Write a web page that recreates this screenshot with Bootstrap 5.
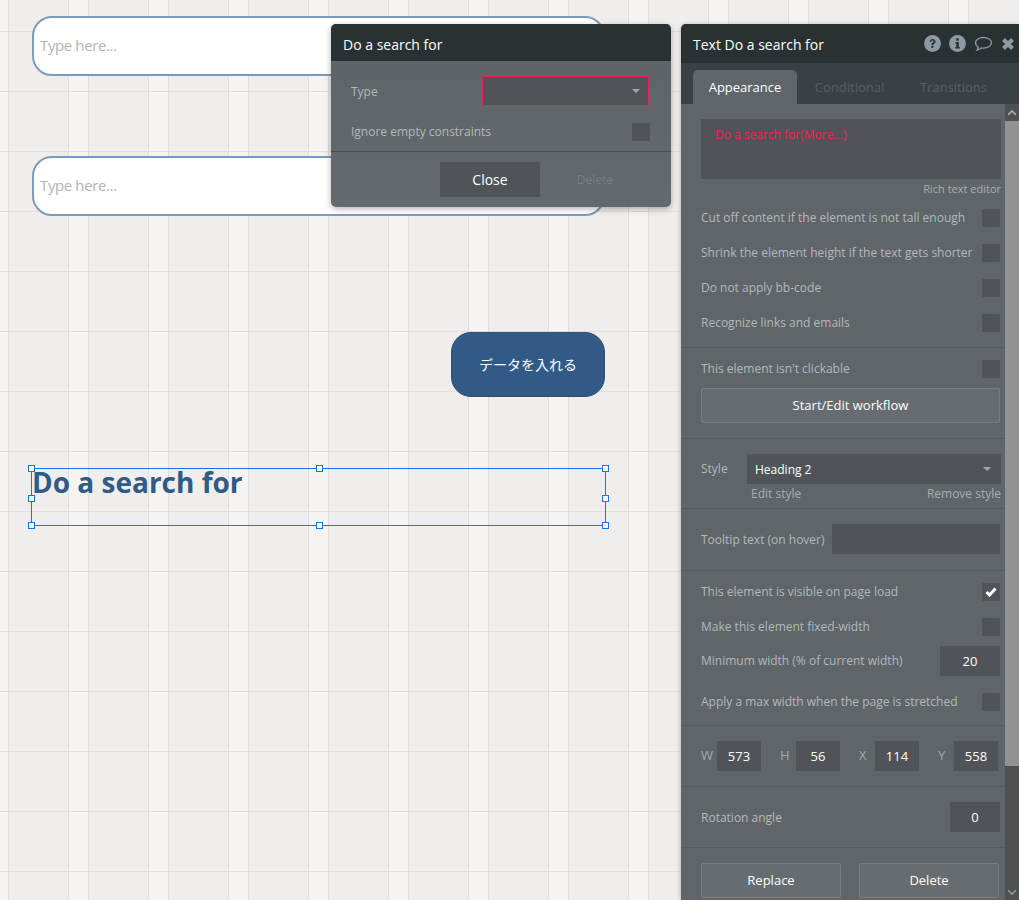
<!DOCTYPE html>
<html lang="en">
<head>
<meta charset="utf-8">
<title>Editor</title>
<link href="https://cdn.jsdelivr.net/npm/bootstrap@5.3.0/dist/css/bootstrap.min.css" rel="stylesheet">
<style>
html,body{margin:0;height:100%;overflow:hidden}
body{font-family:"Open Sans","Noto Sans CJK JP",sans-serif;font-size:12px;color:#b4b9bb}
.stage{position:relative;width:1019px;height:900px;overflow:hidden;background-color:#f6f3f0;
 background-image:
 repeating-linear-gradient(180deg,transparent 0 31px,#e2dfdc 31px 32px,transparent 32px 60px),
 repeating-linear-gradient(90deg,#f6f3f0 0 8px,#e0dddb 8px 9px,#f0edea 9px 68px,#e0dddb 68px 69px,#f6f3f0 69px 88px);
 background-size:100% 60px,80px 100%;background-repeat:repeat;background-position:0 0,0 0}
.typein{position:absolute;left:32px;width:573px;height:60px;background:#fff;border:2px solid #7b9cba;border-radius:20px;padding-left:6px;color:#b5b2b0;font-family:"Open Sans",sans-serif;font-weight:400;font-size:15px;line-height:54px;letter-spacing:-.38px}
.typein.one{top:16px}.typein.two{top:156px}
.savebtn{position:absolute;left:451px;top:332px;width:154px;height:65px;background:#325a87;border:1px solid #2d5078;border-radius:20px;color:#fff;font-size:14px;font-family:"Noto Sans CJK JP",sans-serif}
.selbox{position:absolute;left:31px;top:468px;width:575px;height:58px;border:1px solid #1575e8}
.headtext{position:absolute;left:32px;top:464px;color:#2f5b88;font-family:"Open Sans",sans-serif;font-weight:700;font-size:28px;line-height:36px;letter-spacing:0;white-space:nowrap}
.hdl{position:absolute;width:7px;height:7px;background:#fff;border:1px solid #1575e8}
.dialog{position:absolute;left:331px;top:24px;width:340px;height:183px;border-radius:5px;background:linear-gradient(#5d6367,#63696d);box-shadow:0 2px 6px rgba(0,0,0,.3);overflow:hidden}
.dlghead{height:37px;background:#2a3133;color:#fff;font-size:14px;line-height:41px;padding-left:12px}
.dlgrow{padding-left:20px;padding-right:21px}
.field{background:#505458;color:#fff;border-radius:1px}
.dlgsel{width:167px;height:30px;border:1px solid #ee1f55;margin-right:1px}
.tick{width:18px;height:18px;background:#505458;border-radius:1px;flex:none}
.caret{width:0;height:0;border-left:4.5px solid transparent;border-right:4.5px solid transparent;border-top:4.5px solid #a4a8aa}
.closebtn{width:100px;height:35px;background:#505458;color:#fff;font-size:14px;line-height:35px;text-align:center}
.panel{position:absolute;left:681px;top:24px;width:338px;height:876px;border-radius:5px 0 0 0;background:#5f6569;overflow:hidden;box-shadow:0 1px 5px rgba(0,0,0,.3)}
.panelhead{height:39px;background:#2a3133;color:#fff;font-size:14px;padding:0 4px 0 12px}
.tabstrip{height:41px;background:#3a4144;padding:7px 0 0 12px;font-size:13px;color:#585e61;gap:8px}
.tabon{width:104px;height:34px;border-radius:5px 5px 0 0;background:#5f6569;color:#fff;text-align:center;line-height:34px}
.taboff{line-height:34px;width:89px}
.scrolltrack{position:absolute;right:0;top:80px;width:14px;bottom:0;background:#4d5154}
.scrollthumb{position:absolute;left:0;top:17px;width:14px;height:645px;background:#8f9396}
.arrow{position:absolute;left:3px;width:8px;height:8px}
.paneinner{width:324px}
.sect{padding:0 5px 0 20px;border-bottom:1px solid #565b5f}
.editor{height:60px;background:#505458;color:#fa1a55;font-size:12px;padding:7px 14px;margin-right:-1px}
.hint{font-size:12px;line-height:14px;color:#a9adaf}
.opt{height:35px}
.nudge{padding-top:2px}
.greybtn{height:35px;background:#676c70;border:1px solid #777c80;border-radius:2px;color:#fff;font-size:13px;line-height:33px;text-align:center}
.equalbtn{flex:1 1 0}
.val{height:30px;background:#505458;color:#fff;text-align:center;line-height:30px;font-size:13px}
.coordlbl{color:#a3a8aa;font-size:13px;width:16px;text-align:left}
.dimbox{width:44px}
</style>
</head>
<body>
<div class="stage">
  <div class="typein one">Type here...</div>
  <div class="typein two">Type here...</div>
  <div class="savebtn d-flex align-items-center justify-content-center">データを入れる</div>
  <div class="selbox"></div>
  <div class="headtext">Do a search for</div>
  <span class="hdl" style="left:28px;top:465px"></span><span class="hdl" style="left:316px;top:465px"></span><span class="hdl" style="left:602px;top:465px"></span>
  <span class="hdl" style="left:28px;top:495px"></span><span class="hdl" style="left:602px;top:495px"></span>
  <span class="hdl" style="left:28px;top:522px"></span><span class="hdl" style="left:316px;top:522px"></span><span class="hdl" style="left:602px;top:522px"></span>

  <div class="dialog">
    <div class="dlghead">Do a search for</div>
    <div class="dlgrow d-flex align-items-center justify-content-between" style="height:46px;margin-top:7px"><span class="nudge">Type</span>
      <div class="field dlgsel d-flex align-items-center justify-content-end pe-2"><span class="caret"></span></div></div>
    <div class="dlgrow d-flex align-items-center justify-content-between" style="height:36px"><span>Ignore empty constraints</span><span class="tick"></span></div>
    <div class="d-flex align-items-center" style="border-top:1px solid #484d50;margin-top:1px;padding:10px 0 0 109px">
      <div class="closebtn">Close</div>
      <div class="ms-auto" style="color:#797d80;margin-right:58px">Delete</div>
    </div>
  </div>

  <div class="panel">
    <div class="panelhead d-flex align-items-center justify-content-between">
      <span class="nudge">Text Do a search for</span>
      <div class="d-flex align-items-center" style="gap:8px">
        <svg width="17" height="17" viewBox="0 0 17 17"><circle cx="8.5" cy="8.5" r="8.400" fill="#8c9aa3"/><path d="M5.600 6.600C5.800 4.900 7 4 8.600 4c1.700 0 3 1 3 2.500 0 2.200-2.300 2-2.300 3.700H7.400c0-2.600 2.200-2.500 2.200-3.600 0-.6-.4-1-1.100-1-.7 0-1.100.4-1.200 1.100z" fill="#2a3133"/><rect x="7.400" y="11" width="2" height="2" fill="#2a3133"/></svg>
        <svg width="17" height="17" viewBox="0 0 17 17"><circle cx="8.500" cy="8.500" r="8.400" fill="#8c9aa3"/><rect x="7.200" y="3.300" width="2.600" height="2.400" fill="#2a3133"/><path d="M6.300 7h3.500v5h1v1.500H6.300V12h1V8.500h-1z" fill="#2a3133"/></svg>
        <svg width="19" height="16" viewBox="0 0 19 16"><path d="M9.500 1.500c4.500 0 8 2.400 8 5.300s-3.500 5.300-8 5.300c-.8 0-1.500-.1-2.200-.2C6 13.200 4.500 14 3 14.200c.8-.9 1.300-1.900 1.400-3C2.700 10.200 1.500 8.600 1.500 6.800c0-2.900 3.500-5.300 8-5.300z" fill="none" stroke="#8c9aa3" stroke-width="1.300"/></svg>
        <svg width="14" height="14" viewBox="0 0 14 14"><path d="M2.500 2.500l9 9M11.500 2.500l-9 9" stroke="#8c9aa3" stroke-width="4"/></svg>
      </div>
    </div>
    <div class="tabstrip d-flex">
      <div class="tabon">Appearance</div><div class="taboff text-center">Conditional</div><div class="taboff text-center" style="margin-left:7px">Transitions</div>
    </div>
    <div class="scrolltrack"><div class="scrollthumb"></div>
      <svg class="arrow" style="top:5px" viewBox="0 0 8 8"><path d="M0 6l4-4 4 4" fill="none" stroke="#a7abad" stroke-width="1.600"/></svg>
      <svg class="arrow" style="bottom:4px" viewBox="0 0 8 8"><path d="M0 2l4 4 4-4" fill="none" stroke="#8f9396" stroke-width="1.600"/></svg>
    </div>
    <div class="paneinner">
      <div class="sect" style="padding-top:15px;height:244px">
        <div class="editor">Do a search for(More...)</div>
        <div class="hint text-end" style="margin:3px -1px 4px 0;font-size:11px">Rich text editor</div>
        <div class="opt d-flex align-items-center justify-content-between"><span>Cut off content if the element is not tall enough</span><span class="tick"></span></div>
        <div class="opt d-flex align-items-center justify-content-between"><span>Shrink the element height if the text gets shorter</span><span class="tick"></span></div>
        <div class="opt d-flex align-items-center justify-content-between"><span>Do not apply bb-code</span><span class="tick"></span></div>
        <div class="opt d-flex align-items-center justify-content-between"><span>Recognize links and emails</span><span class="tick"></span></div>
      </div>
      <div class="sect" style="height:91px;padding-top:11px">
        <div class="d-flex align-items-center justify-content-between" style="height:20px;margin-bottom:9px"><span>This element isn't clickable</span><span class="tick"></span></div>
        <div class="greybtn">Start/Edit workflow</div>
      </div>
      <div class="sect" style="height:70px;padding-top:15px">
        <div class="d-flex align-items-center" style="height:30px"><span style="width:46px">Style</span>
          <div class="field d-flex align-items-center justify-content-between flex-grow-1" style="height:30px;padding:0 10px 0 8px;margin-right:-1px"><span class="nudge">Heading 2</span><span class="caret"></span></div></div>
        <div class="hint d-flex justify-content-between" style="margin:2px -1px 0 50px;line-height:15px"><span>Edit style</span><span>Remove style</span></div>
      </div>
      <div class="sect" style="height:62px;padding-top:15px">
        <div class="d-flex align-items-center justify-content-between" style="height:30px"><span class="nudge">Tooltip text (on hover)</span><div class="field" style="width:168px;height:30px"></div></div>
      </div>
      <div class="sect" style="height:155px;padding-top:3px">
        <div class="opt d-flex align-items-center justify-content-between"><span>This element is visible on page load</span>
          <span class="tick d-flex align-items-center justify-content-center"><svg width="12" height="10" viewBox="0 0 12 10"><path d="M1.500 5l3 3 6-6.500" fill="none" stroke="#fff" stroke-width="3"/></svg></span></div>
        <div class="opt d-flex align-items-center justify-content-between"><span>Make this element fixed-width</span><span class="tick"></span></div>
        <div class="d-flex align-items-center justify-content-between" style="height:33px"><span>Minimum width (% of current width)</span><div class="val" style="width:60px">20</div></div>
        <div class="d-flex align-items-center justify-content-between" style="height:40px;padding-top:9px"><span>Apply a max width when the page is stretched</span><span class="tick"></span></div>
      </div>
      <div class="sect" style="height:61px;padding-top:15px;padding-right:7px">
        <div class="d-flex align-items-center justify-content-between">
          <div class="d-flex align-items-center"><span class="coordlbl">W</span><div class="val dimbox">573</div></div>
          <div class="d-flex align-items-center"><span class="coordlbl">H</span><div class="val dimbox">56</div></div>
          <div class="d-flex align-items-center"><span class="coordlbl">X</span><div class="val dimbox">114</div></div>
          <div class="d-flex align-items-center"><span class="coordlbl">Y</span><div class="val dimbox">558</div></div>
        </div>
      </div>
      <div class="sect" style="height:61px;padding-top:15px">
        <div class="d-flex align-items-center justify-content-between" style="height:30px"><span class="nudge">Rotation angle</span><div class="val" style="width:50px">0</div></div>
      </div>
      <div class="d-flex" style="padding:15px 6px 0 20px;gap:18px">
        <div class="greybtn equalbtn">Replace</div><div class="greybtn equalbtn">Delete</div>
      </div>
    </div>
  </div>
</div>
<script src="https://cdn.jsdelivr.net/npm/bootstrap@5.3.0/dist/js/bootstrap.bundle.min.js"></script>
</body>
</html>
